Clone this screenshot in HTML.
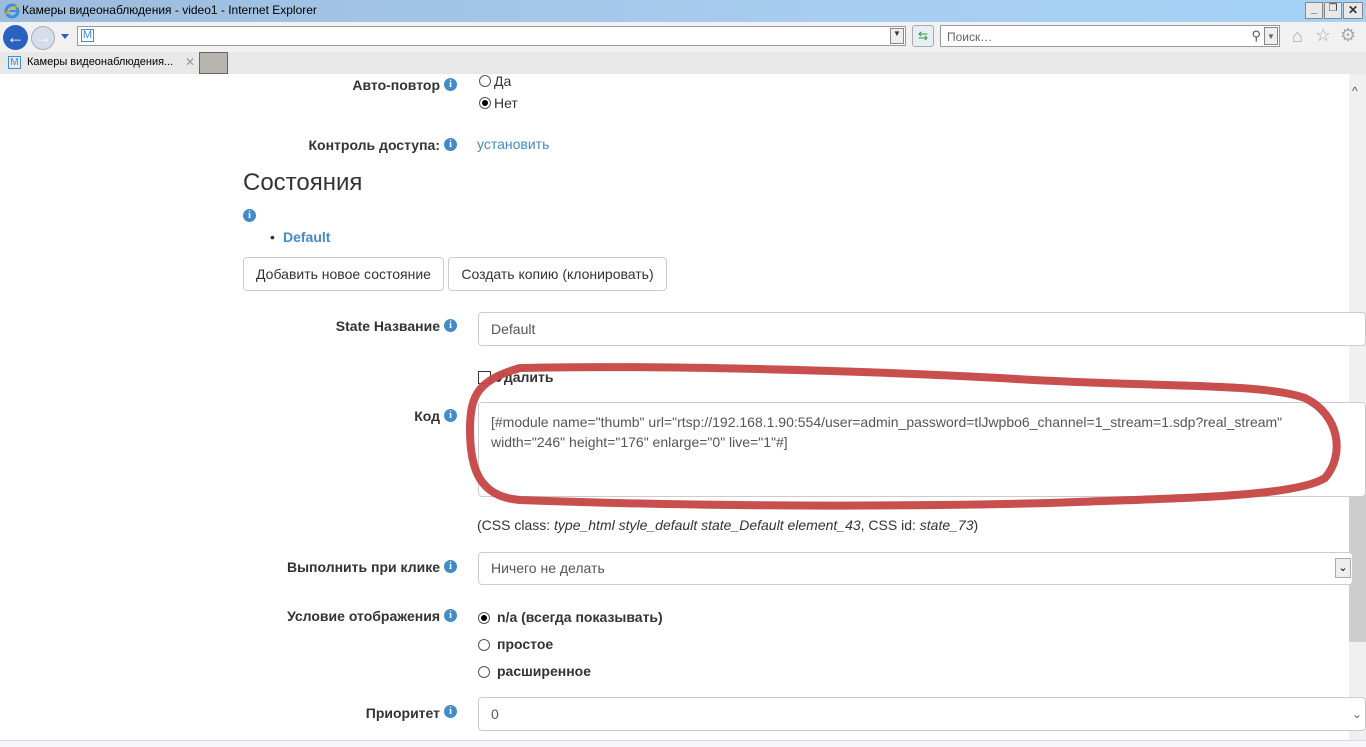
<!DOCTYPE html>
<html><head><meta charset="utf-8"><style>
*{margin:0;padding:0;box-sizing:border-box}
body{width:1366px;height:747px;overflow:hidden;font-family:"Liberation Sans",Arial,sans-serif;background:#fff;position:relative;color:#333}
.a{position:absolute}
.title{left:0;top:0;width:1366px;height:22px;background:linear-gradient(90deg,#9dbbdc,#a7cdf0 60%,#a3d3f7)}
.title span{position:absolute;left:22px;top:3px;font-size:12px;color:#000}
.nav{left:0;top:22px;width:1366px;height:30px;background:#f1f1f1}
.tabs{left:0;top:52px;width:1366px;height:22px;background:#e8e8e8}
.lbl{position:absolute;font-size:14px;font-weight:bold;color:#333;text-align:right;width:440px;left:0}
.i{position:absolute;width:13px;height:13px;border-radius:50%;background:#428bca;color:#fff;font-size:10px;font-weight:bold;text-align:center;line-height:13px;font-family:"Liberation Serif",serif}
.inp{position:absolute;border:1px solid #ccc;border-radius:4px;background:#fff;font-size:14px;color:#555;padding-left:12px}
.rad{position:absolute;width:12px;height:12px;border:1px solid #555;border-radius:50%;background:#fff}
.rad.on::after{content:"";position:absolute;left:2px;top:2px;width:6px;height:6px;border-radius:50%;background:#000}
.btn{position:absolute;border:1px solid #ccc;border-radius:4px;font-size:14px;color:#333;text-align:center;line-height:32px;background:#fff}
</style></head><body>
<div class="a title"><svg class="a" style="left:4px;top:3px" width="16" height="16"><circle cx="8" cy="8" r="6" fill="none" stroke="#3a8fd8" stroke-width="3"/><rect x="3" y="7" width="10" height="2" fill="#3a8fd8"/><path d="M1 12 Q8 2 15 4" stroke="#f0b400" stroke-width="1.5" fill="none"/></svg><span>Камеры видеонаблюдения - video1 - Internet Explorer</span>
<div class="a" style="left:1305px;top:2px;width:18px;height:17px;background:#e8e8e8;border:1px solid #888;font-size:11px;text-align:center;font-weight:bold">_</div>
<div class="a" style="left:1324px;top:2px;width:18px;height:17px;background:#e8e8e8;border:1px solid #888;font-size:10px;text-align:center">❐</div>
<div class="a" style="left:1343px;top:2px;width:20px;height:17px;background:#e8e8e8;border:1px solid #888;font-size:12px;text-align:center;font-weight:bold">✕</div></div>
<div class="a nav">
<div class="a" style="left:3px;top:3px;width:25px;height:25px;border-radius:50%;background:#2a62c0;color:#fff;text-align:center;font-size:18px;line-height:24px;font-weight:bold">←</div>
<div class="a" style="left:31px;top:4px;width:24px;height:24px;border-radius:50%;background:#d4dde8;border:1px solid #aab;color:#fff;text-align:center;font-size:17px;line-height:22px">→</div>
<div class="a" style="left:61px;top:12px;border:4px solid transparent;border-top:5px solid #2a62c0"></div>
<div class="a" style="left:77px;top:4px;width:829px;height:20px;background:#fff;border:1px solid #999"><span class="a" style="left:3px;top:2px;font-size:11px;color:#3a8fd8;border:1px solid #3a8fd8;width:13px;height:13px;text-align:center;line-height:11px">M</span><span class="a" style="right:1px;top:1px;width:14px;height:16px;border:1px solid #888;background:#eee;font-size:8px;text-align:center">▼</span></div>
<div class="a" style="left:912px;top:3px;width:22px;height:22px;border:1px solid #aaa;border-radius:3px;background:#e6eef8;color:#2a9a2a;font-size:12px;text-align:center;line-height:20px">⇆</div>
<div class="a" style="left:940px;top:3px;width:340px;height:22px;background:#fff;border:1px solid #999;font-size:12px;color:#666;padding:4px 6px">Поиск…<span class="a" style="right:18px;top:2px;font-size:13px;color:#555">⚲</span><span class="a" style="right:1px;top:1px;width:14px;height:18px;border:1px solid #888;background:#eee;font-size:8px;text-align:center;line-height:18px">▼</span></div>
<div class="a" style="left:1292px;top:4px;font-size:18px;color:#aaa">⌂</div>
<div class="a" style="left:1315px;top:3px;font-size:18px;color:#aaa">☆</div>
<div class="a" style="left:1340px;top:3px;font-size:18px;color:#aaa">⚙</div>
</div>
<div class="a tabs">
<span class="a" style="left:8px;top:4px;font-size:10px;color:#3a8fd8;border:1px solid #3a8fd8;width:13px;height:13px;text-align:center;line-height:11px">M</span>
<span class="a" style="left:27px;top:4px;font-size:11px;color:#000">Камеры видеонаблюдения...</span>
<span class="a" style="left:185px;top:3px;font-size:12px;color:#999">✕</span>
<div class="a" style="left:199px;top:0;width:29px;height:22px;background:#b8b4ae;border:1px solid #666"></div>
</div>
<div class="a" style="left:1349px;top:74px;width:17px;height:673px;background:#f0f0f0"><div class="a" style="left:0;top:367px;width:17px;height:201px;background:#cdcdcd"></div><span class="a" style="left:3px;top:10px;font-size:12px;color:#555">^</span></div>

<div class="lbl" style="top:77px">Авто-повтор</div><div class="i" style="left:444px;top:78px">i</div>
<div class="rad" style="left:479px;top:75px"></div><span class="a" style="left:494px;top:73px;font-size:14px">Да</span>
<div class="rad on" style="left:479px;top:97px"></div><span class="a" style="left:494px;top:95px;font-size:14px">Нет</span>
<div class="lbl" style="top:137px">Контроль доступа:</div><div class="i" style="left:444px;top:138px">i</div>
<span class="a" style="left:477px;top:136px;font-size:14px;color:#428bca">установить</span>
<div class="a" style="left:243px;top:169px;font-size:24px;color:#333">Состояния</div>
<div class="i" style="left:243px;top:209px">i</div>
<span class="a" style="left:270px;top:229px;font-size:14px">•</span><span class="a" style="left:283px;top:229px;font-size:14px;font-weight:bold;color:#428bca">Default</span>
<div class="btn" style="left:243px;top:257px;width:201px;height:34px">Добавить новое состояние</div>
<div class="btn" style="left:448px;top:257px;width:219px;height:34px">Создать копию (клонировать)</div>
<div class="lbl" style="top:318px">State Название</div><div class="i" style="left:444px;top:319px">i</div>
<div class="inp" style="left:478px;top:312px;width:888px;height:34px;line-height:32px">Default</div>
<div class="a" style="left:478px;top:371px;width:13px;height:13px;border:1px solid #333"></div><span class="a" style="left:496px;top:369px;font-size:14px;font-weight:bold">Удалить</span>
<div class="lbl" style="top:408px">Код</div><div class="i" style="left:444px;top:409px">i</div>
<div class="inp" style="left:478px;top:402px;width:888px;height:95px;padding-top:9px;line-height:20px;font-size:14px;color:#555">[#module name="thumb" url="rtsp://192.168.1.90:554/user=admin_password=tlJwpbo6_channel=1_stream=1.sdp?real_stream"<br>width="246" height="176" enlarge="0" live="1"#]</div>
<div class="a" style="left:477px;top:517px;font-size:14px;color:#333">(CSS class: <i>type_html style_default state_Default element_43</i>, CSS id: <i>state_73</i>)</div>
<div class="lbl" style="top:559px">Выполнить при клике</div><div class="i" style="left:444px;top:560px">i</div>
<div class="inp" style="left:478px;top:552px;width:875px;height:33px;line-height:31px">Ничего не делать<span class="a" style="right:1px;top:5px;width:16px;height:20px;border:1px solid #aaa;background:#eee;font-size:11px;line-height:18px;text-align:center;color:#000">⌄</span></div>
<div class="lbl" style="top:608px">Условие отображения</div><div class="i" style="left:444px;top:609px">i</div>
<div class="rad on" style="left:478px;top:612px"></div><span class="a" style="left:497px;top:609px;font-size:14px;font-weight:bold">n/a (всегда показывать)</span>
<div class="rad" style="left:478px;top:639px"></div><span class="a" style="left:497px;top:636px;font-size:14px;font-weight:bold">простое</span>
<div class="rad" style="left:478px;top:666px"></div><span class="a" style="left:497px;top:663px;font-size:14px;font-weight:bold">расширенное</span>
<div class="lbl" style="top:705px">Приоритет</div><div class="i" style="left:444px;top:705px">i</div>
<div class="inp" style="left:478px;top:697px;width:888px;height:34px;line-height:32px">0<span class="a" style="right:3px;top:0;font-size:12px;color:#666">⌄</span></div>
<div class="a" style="left:0;top:740px;width:1366px;height:7px;background:#f4f6fa;border-top:1px solid #ddd"></div>
<svg class="a" style="left:0;top:0" width="1366" height="747"><path d="M520 368 C650 365 850 370 1000 378 C1150 388 1260 382 1305 398 C1340 415 1345 455 1325 478 C1295 497 1180 498 1050 503 C850 508 650 505 520 500 C480 497 470 470 470 430 C470 395 478 380 520 368 Z" fill="none" stroke="#c64545" stroke-width="8" stroke-opacity="0.95"/></svg>
</body></html>
